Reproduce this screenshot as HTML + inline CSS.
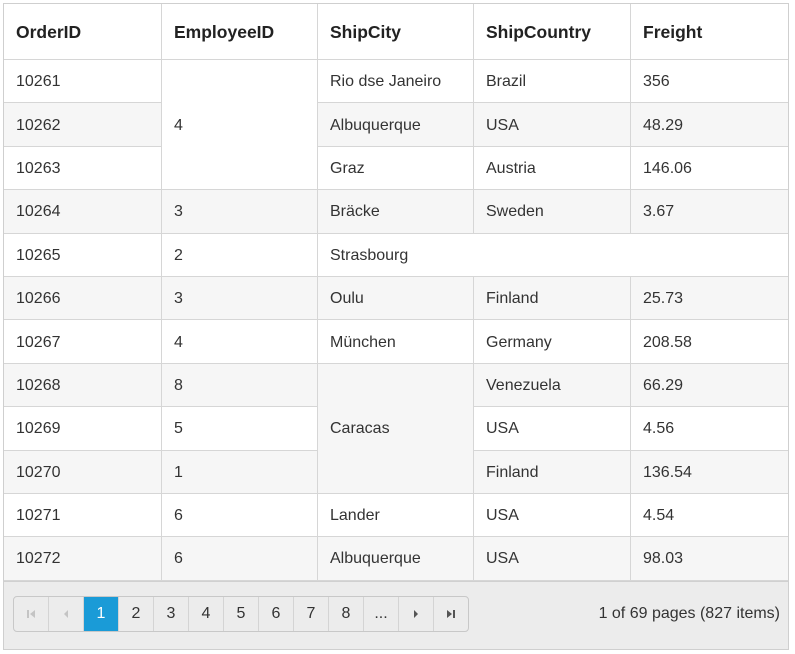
<!DOCTYPE html>
<html><head><style>
body{margin:0;background:#fff;font-family:"Liberation Sans",sans-serif;}
.g{position:absolute;left:3px;top:3px;width:786px;height:647px;border:1px solid #cfcfcf;box-sizing:border-box;background:#fff;overflow:hidden}
table{border-collapse:collapse;table-layout:fixed;width:786px;margin-left:-1px;margin-top:-1px}
td,th{border:1px solid #d6d6d6;padding:2px 0 0 12px;text-align:left;font-size:16px;color:#333;white-space:nowrap;overflow:hidden}
th{font-weight:bold;height:53px;font-size:17.5px;color:#222}
td{height:40.4px}
tr.a td{background:#f6f6f6}
td.w{background:#fff!important}
td.s{background:#f6f6f6!important}
.p{position:absolute;left:0;top:577px;width:786px;height:70px;background:#ececec;border-top:1px solid #d0d0d0}
.bs{position:absolute;left:9px;top:14px;height:34px;display:flex;border:1px solid #c8c8c8;border-radius:4px;overflow:hidden;background:#ececec}
.bs div{width:34px;border-right:1px solid #d4d4d4;display:flex;align-items:center;justify-content:center;font-size:16px;color:#333}
.bs div:last-child{border-right:0}
.bs .c{background:#1a9bd7;color:#fff}
.info{position:absolute;right:10px;top:23px;font-size:16px;color:#333}
</style></head><body>
<div class="g"><table>
<colgroup><col style="width:158px"><col style="width:156px"><col style="width:156px"><col style="width:157px"><col style="width:159px"></colgroup>
<tr><th>OrderID</th><th>EmployeeID</th><th>ShipCity</th><th>ShipCountry</th><th>Freight</th></tr>
<tr><td>10261</td><td rowspan="3" class="w">4</td><td>Rio dse Janeiro</td><td>Brazil</td><td>356</td></tr>
<tr class="a"><td>10262</td><td>Albuquerque</td><td>USA</td><td>48.29</td></tr>
<tr><td>10263</td><td>Graz</td><td>Austria</td><td>146.06</td></tr>
<tr class="a"><td>10264</td><td>3</td><td>Bräcke</td><td>Sweden</td><td>3.67</td></tr>
<tr><td>10265</td><td>2</td><td colspan="3">Strasbourg</td></tr>
<tr class="a"><td>10266</td><td>3</td><td>Oulu</td><td>Finland</td><td>25.73</td></tr>
<tr><td>10267</td><td>4</td><td>München</td><td>Germany</td><td>208.58</td></tr>
<tr class="a"><td>10268</td><td>8</td><td rowspan="3" class="s">Caracas</td><td>Venezuela</td><td>66.29</td></tr>
<tr><td>10269</td><td>5</td><td>USA</td><td>4.56</td></tr>
<tr class="a"><td>10270</td><td>1</td><td>Finland</td><td>136.54</td></tr>
<tr><td>10271</td><td>6</td><td>Lander</td><td>USA</td><td>4.54</td></tr>
<tr class="a"><td>10272</td><td>6</td><td>Albuquerque</td><td>USA</td><td>98.03</td></tr>
</table>
<div class="p"><div class="bs">
<div><svg width="10" height="10"><rect x="1" y="1" width="2" height="8" fill="#c4c4c4"/><path d="M9 1V9L4 5Z" fill="#c4c4c4"/></svg></div>
<div><svg width="10" height="10"><path d="M7 1V9L3 5Z" fill="#c4c4c4"/></svg></div>
<div class="c">1</div><div>2</div><div>3</div><div>4</div><div>5</div><div>6</div><div>7</div><div>8</div><div>...</div>
<div><svg width="10" height="10"><path d="M3 1V9L7 5Z" fill="#555"/></svg></div>
<div><svg width="10" height="10"><path d="M1 1V9L6 5Z" fill="#555"/><rect x="7" y="1" width="2" height="8" fill="#555"/></svg></div>
</div><div class="info">1 of 69 pages (827 items)</div></div>
</div>
</body></html>
